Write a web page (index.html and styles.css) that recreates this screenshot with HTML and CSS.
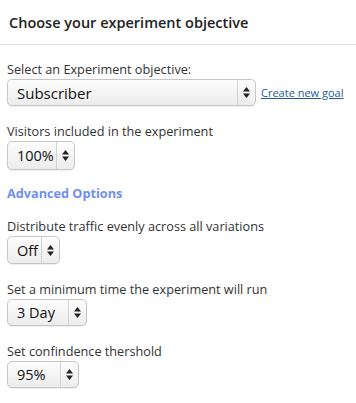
FILE: index.html
```html
<!DOCTYPE html>
<html lang="en">
<head>
    <meta charset="UTF-8">
    <title>Choose your experiment objective</title>
    <link rel="stylesheet" href="styles.css">
</head>
<body>
    <div class="header">
        <h3>Choose your experiment objective</h3>
    </div>
    <div class="content">
        <div class="field">
            <label>Select an Experiment objective:</label>
            <div class="row">
                <div class="select wide">
                    <span class="value">Subscriber</span>
                    <span class="arrows"><svg width="7" height="11" viewBox="0 0 7 11"><path d="M3.5 0L7 4.5H0z M3.5 11L0 6.5H7z" fill="#222"/></svg></span>
                </div>
                <a class="new-goal">Create new goal</a>
            </div>
        </div>
        <div class="field">
            <label>Visitors included in the experiment</label>
            <div class="select pct">
                <span class="value">100%</span>
                <span class="arrows"><svg width="7" height="11" viewBox="0 0 7 11"><path d="M3.5 0L7 4.5H0z M3.5 11L0 6.5H7z" fill="#222"/></svg></span>
            </div>
        </div>
        <div class="advanced">Advanced Options</div>
        <div class="field">
            <label>Distribute traffic evenly across all variations</label>
            <div class="select off">
                <span class="value">Off</span>
                <span class="arrows"><svg width="7" height="11" viewBox="0 0 7 11"><path d="M3.5 0L7 4.5H0z M3.5 11L0 6.5H7z" fill="#222"/></svg></span>
            </div>
        </div>
        <div class="field">
            <label>Set a minimum time the experiment will run</label>
            <div class="select days">
                <span class="value">3 Day</span>
                <span class="arrows"><svg width="7" height="11" viewBox="0 0 7 11"><path d="M3.5 0L7 4.5H0z M3.5 11L0 6.5H7z" fill="#222"/></svg></span>
            </div>
        </div>
        <div class="field">
            <label>Set confindence thershold</label>
            <div class="select conf">
                <span class="value">95%</span>
                <span class="arrows"><svg width="7" height="11" viewBox="0 0 7 11"><path d="M3.5 0L7 4.5H0z M3.5 11L0 6.5H7z" fill="#222"/></svg></span>
            </div>
        </div>
    </div>
</body>
</html>
```

FILE: styles.css
```css
body { margin: 0; font-family: "Open Sans", Arial, sans-serif; background: #fff; color: #333; }
.header { height: 44px; border-bottom: 1px solid #e5e5e5; padding: 0 9px; display: flex; align-items: center; }
.header h3 { margin: 0; font-size: 14.5px; font-weight: 600; color: #222; }
.content { padding: 16px 7px 0; }
.field { margin-bottom: 17px; }
.field label { display: block; font-size: 12.7px; line-height: 16px; margin-bottom: 2px; color: #333; }
.row { display: flex; align-items: center; gap: 5px; }
.select { display: flex; align-items: stretch; height: 27px; box-sizing: border-box; border: 1px solid #c6c6c6; border-radius: 5px;
    background: linear-gradient(#fdfdfd, #ececec); box-shadow: 0 1px 1px #0001; color: #111; }
.select .value { flex: 1; display: flex; align-items: center; padding-left: 9px; font-size: 14.5px; }
.select .arrows { width: 17px; border-left: 1px solid #d2d2d2; display: flex; align-items: center; justify-content: center; }
.wide { width: 249px; }
.wide .value { font-size: 15px; }
.pct { width: 68px; height: 29px; }
.off { width: 53px; height: 28px; }
.days { width: 80px; }
.conf { width: 72px; }
.new-goal { font-size: 11px; color: #2358a0; text-decoration: underline; cursor: pointer; }
.advanced { font-size: 12.7px; font-weight: 700; color: #6f8ff0; margin: -2px 0 17px; line-height: 16px; }
```
